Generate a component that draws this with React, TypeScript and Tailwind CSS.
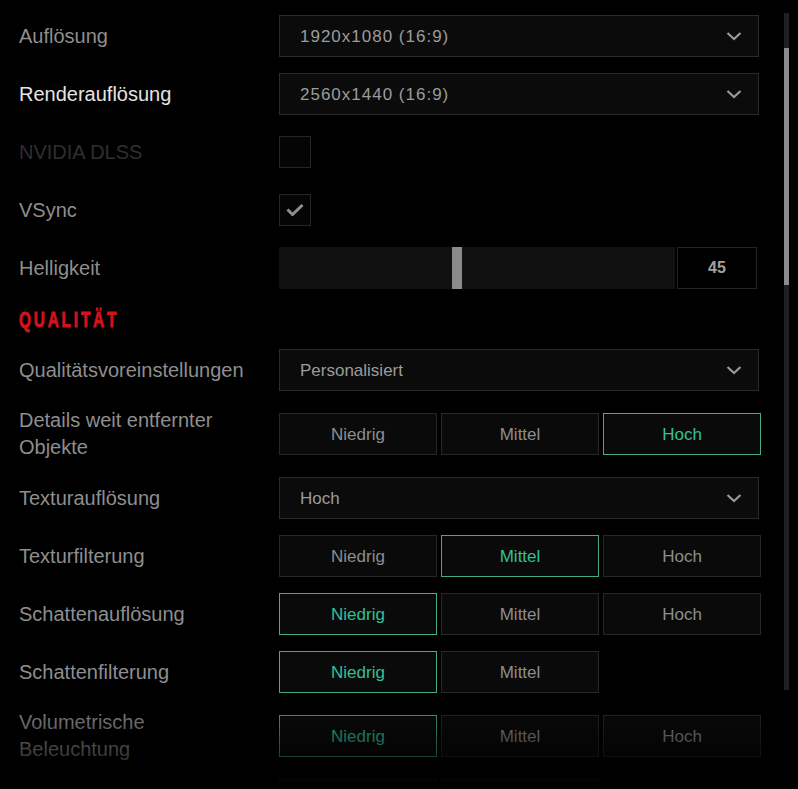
import React from "react";

type Opt = { text: string; selected?: boolean };

const Chevron = () => (
  <svg width="16" height="10" viewBox="0 0 16 10" className="shrink-0">
    <polyline points="1.5,2 8,8 14.5,2" fill="none" stroke="#9a9a9a" strokeWidth="2.2" />
  </svg>
);

const Check = () => (
  <svg width="18" height="12" viewBox="0 0 18 12">
    <polyline points="1.5,5.5 6.5,10.5 16.5,1" fill="none" stroke="#8f8f8f" strokeWidth="3" />
  </svg>
);

function Label({ children, color }: { children: React.ReactNode; color?: string }) {
  return (
    <div className={`w-[236px] mr-[24px] shrink-0 text-[20px] leading-[27px] ${color ?? "text-[#8e8e8e]"}`}>
      {children}
    </div>
  );
}

function Dropdown({ value, tracked }: { value: string; tracked?: boolean }) {
  return (
    <div className="w-[480px] h-[42px] border border-[#2b2b2b] bg-[#0b0b0b] flex items-center justify-between pl-[20px] pr-[16px]">
      <span className={`pt-[2px] text-[17px] text-[#9c9c9c] ${tracked ? "tracking-[1px]" : ""}`}>{value}</span>
      <Chevron />
    </div>
  );
}

function Buttons({ opts }: { opts: Opt[] }) {
  return (
    <div className="flex gap-1 h-[42px]">
      {opts.map((o, i) => (
        <div
          key={i}
          className={`w-[158px] h-[42px] pt-[2px] flex items-center justify-center text-[17px] bg-[#0a0a0a] border ${
            o.selected ? "border-[#45a98b] text-[#31c096]" : "border-[#272727] text-[#8d8d8d]"
          }`}
        >
          {o.text}
        </div>
      ))}
    </div>
  );
}

function Checkbox({ checked }: { checked?: boolean }) {
  return (
    <div className="h-[42px] flex items-center">
      <div className="w-8 h-8 border border-[#252525] bg-[#050505] flex items-center justify-center">
        {checked ? <Check /> : null}
      </div>
    </div>
  );
}

function Slider({ value }: { value: number }) {
  return (
    <div className="flex h-[42px] gap-[2px]">
      <div className="relative w-[396px] h-[42px] bg-[#111111]">
        <div className="absolute top-0 left-[173px] w-[10px] h-[42px] bg-[#8a8a8a]" />
      </div>
      <div className="w-[80px] h-[42px] border border-[#232323] bg-black flex items-center justify-center text-[16px] font-bold text-[#a0a0a0]">
        {value}
      </div>
    </div>
  );
}

function Row({ children }: { children: React.ReactNode }) {
  return <div className="flex items-center">{children}</div>;
}

const NMH = (sel: number, count = 3): Opt[] =>
  ["Niedrig", "Mittel", "Hoch"].slice(0, count).map((t, i) => ({ text: t, selected: i === sel }));

export default function App() {
  return (
    <div className="relative w-[798px] h-[789px] overflow-hidden bg-black font-['Liberation_Sans',Arial,sans-serif]">
      <div className="flex flex-col gap-4 pt-[15px] pl-[19px]">
        <Row>
          <Label>Auflösung</Label>
          <Dropdown value="1920x1080 (16:9)" tracked />
        </Row>
        <Row>
          <Label color="text-[#e4e4e4]">Renderauflösung</Label>
          <Dropdown value="2560x1440 (16:9)" tracked />
        </Row>
        <Row>
          <Label color="text-[#2f2f2f]">NVIDIA DLSS</Label>
          <Checkbox />
        </Row>
        <Row>
          <Label>VSync</Label>
          <Checkbox checked />
        </Row>
        <Row>
          <Label>Helligkeit</Label>
          <Slider value={45} />
        </Row>
        <div className="h-[28px] flex items-center">
          <span className="inline-block origin-left scale-x-70 pt-[2px] text-[22px] leading-[28px] font-bold tracking-[4px] text-[#d3121c] [-webkit-text-stroke:0.9px_#d3121c]">
            QUALITÄT
          </span>
        </div>
        <Row>
          <Label>Qualitätsvoreinstellungen</Label>
          <Dropdown value="Personalisiert" />
        </Row>
        <Row>
          <Label>Details weit entfernter Objekte</Label>
          <Buttons opts={NMH(2)} />
        </Row>
        <Row>
          <Label>Texturauflösung</Label>
          <Dropdown value="Hoch" />
        </Row>
        <Row>
          <Label>Texturfilterung</Label>
          <Buttons opts={NMH(1)} />
        </Row>
        <Row>
          <Label>Schattenauflösung</Label>
          <Buttons opts={NMH(0)} />
        </Row>
        <Row>
          <Label>Schattenfilterung</Label>
          <Buttons opts={NMH(0, 2)} />
        </Row>
        <Row>
          <Label>Volumetrische Beleuchtung</Label>
          <Buttons opts={NMH(0)} />
        </Row>
        <Row>
          <div className="w-[260px] shrink-0 h-[42px]" />
          <Buttons opts={[{ text: "" }, { text: "" }]} />
        </Row>
      </div>

      {/* bottom fade */}
      <div className="pointer-events-none absolute left-0 right-0 bottom-0 h-[92px] bg-linear-to-b from-transparent to-black/95" />

      {/* scrollbar */}
      <div className="absolute left-[784px] top-[13px] w-[5px] h-[677px] bg-[#1f1f1f]">
        <div className="absolute left-0 top-[35px] w-[5px] h-[237px] bg-[#8b8b8b]" />
      </div>
    </div>
  );
}
